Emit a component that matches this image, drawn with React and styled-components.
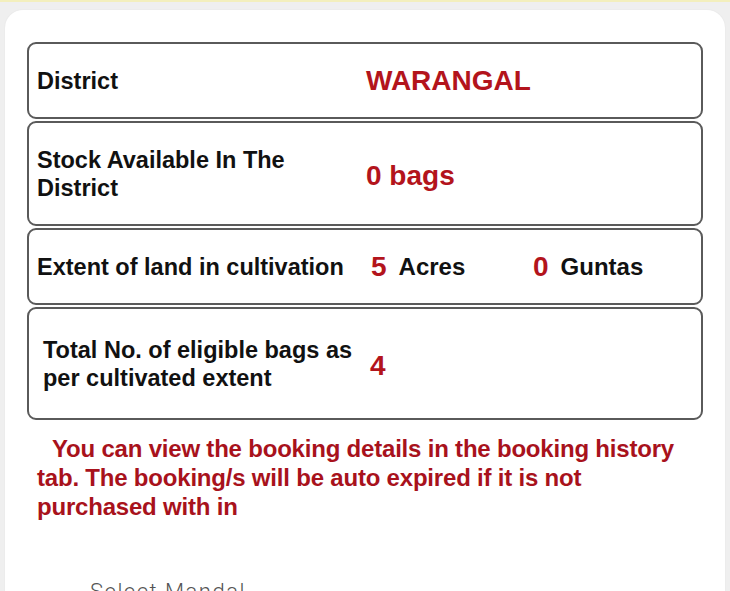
import styled, { createGlobalStyle } from "styled-components";

const GlobalStyle = createGlobalStyle`
  html, body {
    margin: 0;
    padding: 0;
    background: #efefef;
    font-family: "Liberation Sans", Arial, sans-serif;
    overflow: hidden;
  }
`;

const Page = styled.div`
  width: 730px;
  height: 591px;
  overflow: hidden;
  border-top: 2px solid #f3efbd;
  box-sizing: border-box;
  padding: 8px 5px 0 5px;
`;

const Card = styled.div`
  background: #ffffff;
  border-radius: 18px 18px 0 0;
  padding: 32px 22px 0 22px;
  height: 700px;
  box-shadow: 0 0 2px rgba(0, 0, 0, 0.06);
`;

const Table = styled.div`
  display: flex;
  flex-direction: column;
  gap: 2px;
`;

const Row = styled.div`
  display: grid;
  grid-template-columns: ${(p) => p.$labelWidth || 329}px 1fr;
  align-items: center;
  height: ${(p) => p.$height}px;
  box-sizing: border-box;
  border: 2px solid #5a5a5a;
  border-radius: 9px;
  padding-left: ${(p) => p.$pad || 8}px;
`;

const Label = styled.div`
  font-size: 23.5px;
  font-weight: bold;
  color: #111;
  line-height: 28px;
`;

const Value = styled.div`
  font-size: 28px;
  font-weight: bold;
  color: #b3141c;
  display: flex;
  align-items: center;
  margin-top: ${(p) => p.$shift || 0}px;
`;

const Extent = styled.div`
  display: flex;
  align-items: center;
  gap: 12px;
  width: ${(p) => p.$width}px;
  padding-left: ${(p) => p.$indent || 0}px;
`;

const Unit = styled.span`
  font-size: 24px;
  font-weight: bold;
  color: #111;
`;

const Notice = styled.p`
  margin: 14px 20px 0 10px;
  font-size: 24px;
  font-weight: bold;
  line-height: 29px;
  color: #a8121c;
  text-indent: 15px;
  letter-spacing: -0.2px;
`;

const Field = styled.div`
  margin: 58px 0 0 63px;
  font-family: Roboto, "Liberation Sans", sans-serif;
  font-weight: 300;
  font-size: 22px;
  letter-spacing: 1.5px;
  color: #555;
`;

export default function App() {
  return (
    <>
      <GlobalStyle />
      <Page>
        <Card>
          <Table>
            <Row $height={77}>
              <Label>District</Label>
              <Value>WARANGAL</Value>
            </Row>
            <Row $height={105}>
              <Label>
                Stock Available In The
                <br />
                District
              </Label>
              <Value $shift={4}>0 bags</Value>
            </Row>
            <Row $height={77}>
              <Label>Extent of land in cultivation</Label>
              <Value>
                <Extent $width={162} $indent={5}>
                  <span>5</span>
                  <Unit>Acres</Unit>
                </Extent>
                <Extent>
                  <span>0</span>
                  <Unit>Guntas</Unit>
                </Extent>
              </Value>
            </Row>
            <Row $height={113} $pad={14} $labelWidth={327}>
              <Label>
                Total No. of eligible bags as
                <br />
                per cultivated extent
              </Label>
              <Value $shift={4}>4</Value>
            </Row>
          </Table>
          <Notice>
            You can view the booking details in the booking history tab. The
            booking/s will be auto expired if it is not purchased with in
          </Notice>
          <Field>Select Mandal</Field>
        </Card>
      </Page>
    </>
  );
}
